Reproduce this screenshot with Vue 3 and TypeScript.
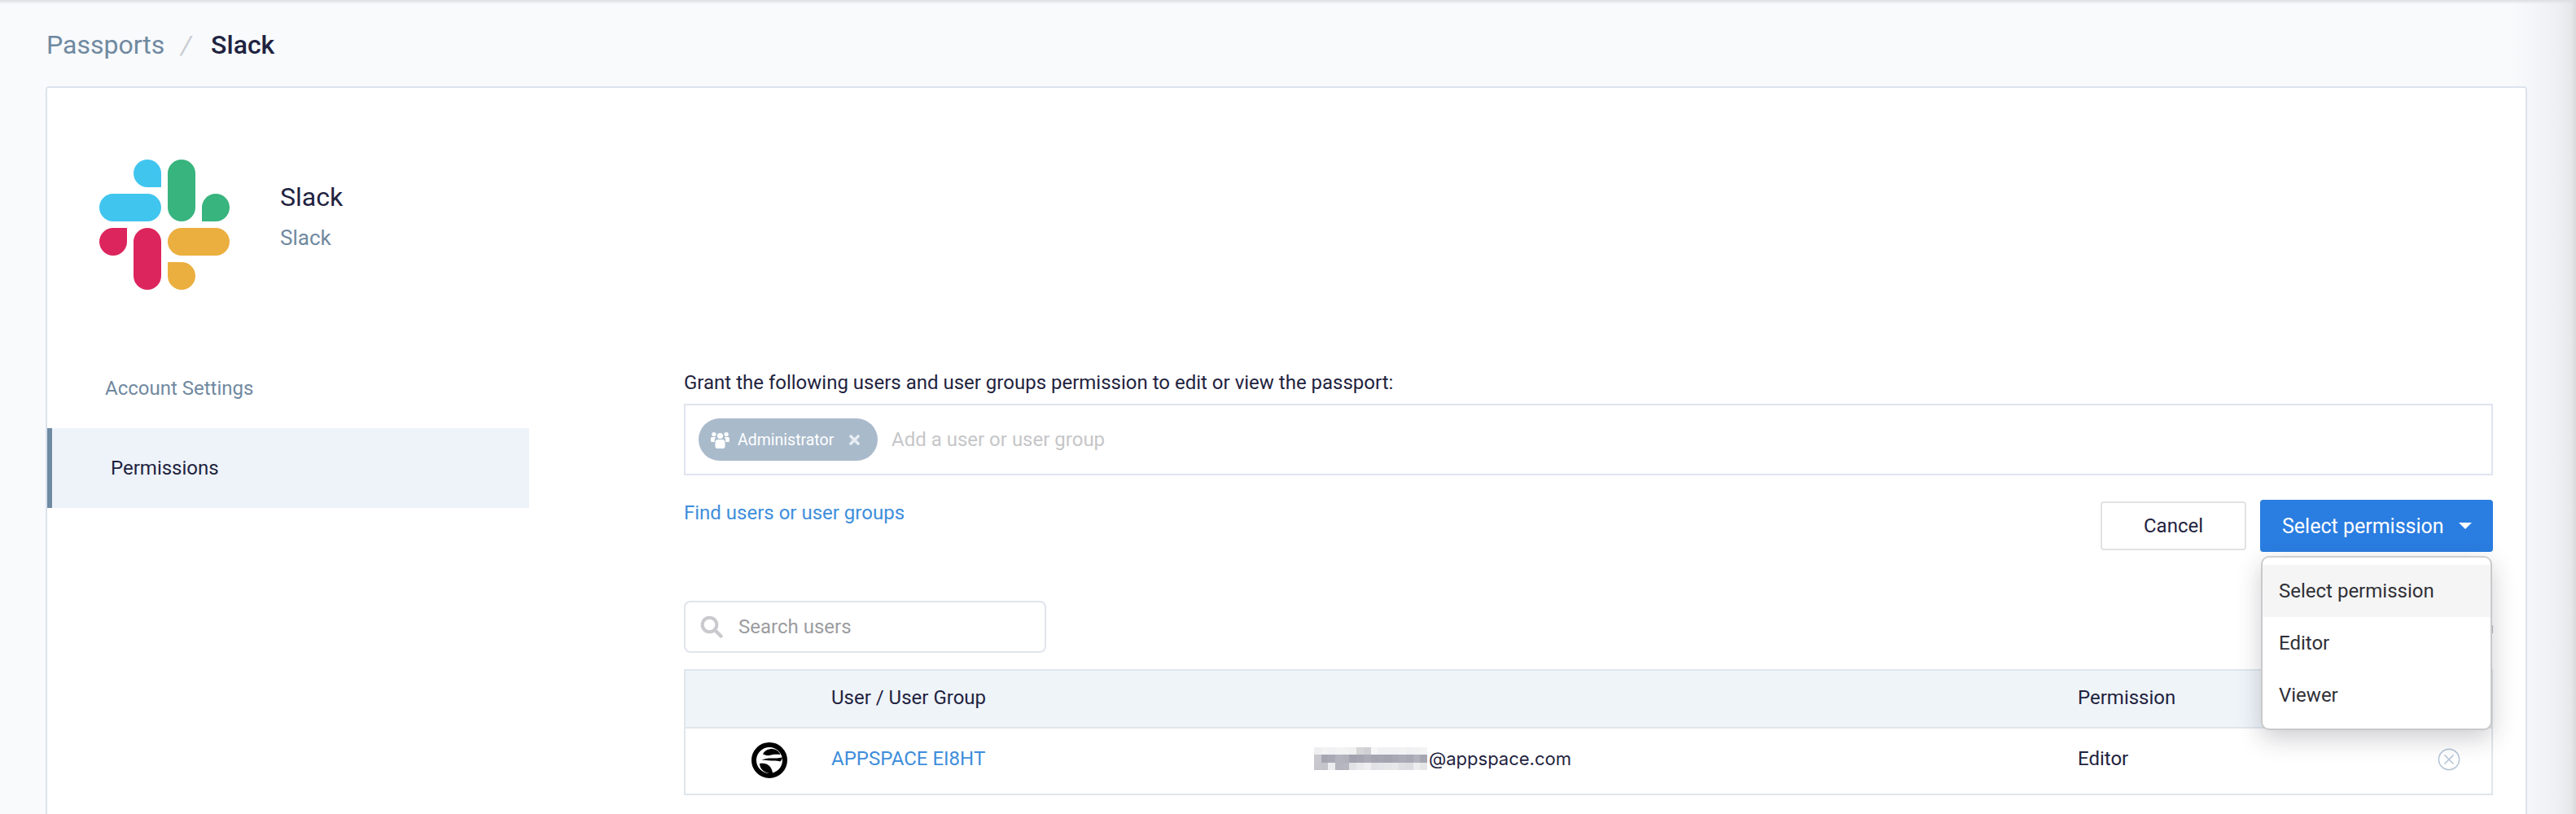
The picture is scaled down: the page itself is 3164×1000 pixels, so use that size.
<script setup lang="ts">
const options: string[] = ['Select permission', 'Editor', 'Viewer']

const blur: string[][] = [
  ['#efeff1','#f3f3f4','#f0f0f2','#f3f3f4','#f2f2f3','#f0f0f1','#d6d6d9','#d0d0d4','#f6f6f7','#f1f1f3','#f1f1f3','#f0f0f2','#f2f2f3','#f0f0f2','#f1f1f3','#f3f3f4'],
  ['#c8c8ce','#a6a6b3','#a9a9b6','#b4b4bf','#b1b1bc','#a1a1af','#a5a5b2','#abaab7','#a5a5b2','#a6a6b3','#a4a4b1','#a8a8b5','#acacb8','#a8a8b5','#b2b2bd','#a6a6b3'],
  ['#c6c6cc','#c4c4cb','#ededf0','#b5b5bf','#b7b7c1','#e2e2e6','#eaeaed','#efeff1','#e2e2e6','#e4e4e8','#e6e6e9','#e8e8eb','#dfdfe3','#dcdce1','#ededf0','#e6e6e9'],
]
</script>

<template>
  <div class="page">
    <nav class="crumbs">
      <span class="crumb-link">Passports</span>
      <span class="crumb-sep">/</span>
      <span class="crumb-current">Slack</span>
    </nav>

    <section class="card">
      <header class="head">
        <svg class="logo" viewBox="0 0 160 160" width="160" height="160">
          <path fill="#40c5ef" d="M76 34h-17a17 17 0 1 1 17-17z" />
          <rect fill="#40c5ef" x="0" y="42" width="76" height="34" rx="17" />
          <rect fill="#38b47e" x="84" y="0" width="34" height="76" rx="17" />
          <path fill="#38b47e" d="M126 76h17a17 17 0 1 0-17-17z" />
          <path fill="#dd255d" d="M34 84v17a17 17 0 1 1-17-17z" />
          <rect fill="#dd255d" x="42" y="84" width="34" height="76" rx="17" />
          <rect fill="#ebaf3f" x="84" y="84" width="76" height="34" rx="17" />
          <path fill="#ebaf3f" d="M84 126h17a17 17 0 1 1-17 17z" />
        </svg>
        <div class="head-text">
          <div class="title">Slack</div>
          <div class="subtitle">Slack</div>
        </div>
      </header>

      <div class="body">
        <aside class="side">
          <div class="side-item">Account Settings</div>
          <div class="side-item active">Permissions</div>
        </aside>

        <main class="content">
          <label class="grant">Grant the following users and user groups permission to edit or view the passport:</label>
          <div class="tag-input">
            <span class="tag">
              <svg class="tag-icon" viewBox="0 0 23 21" width="23" height="21">
                <circle cx="11.5" cy="5.5" r="3.6" fill="#fff" />
                <circle cx="3.9" cy="3.6" r="2.7" fill="#fff" />
                <circle cx="19.1" cy="3.6" r="2.7" fill="#fff" />
                <path fill="#fff" d="M0 8.5C0 7.5 1 7 2 7h3c.6 0 1 .2 1.3.5-.9 1-1.6 2-1.6 3.5v2H1.5C.7 13 0 12.4 0 11.5zM23 8.5C23 7.5 22 7 21 7h-3c-.6 0-1 .2-1.3.5.9 1 1.6 2 1.6 3.5v2h3.2c.8 0 1.5-.6 1.5-1.5z" />
                <path fill="#fff" d="M8.5 10h6c1.7 0 3 1.3 3 3v5.5c0 1.4-1.1 2.5-2.5 2.5H8c-1.4 0-2.5-1.1-2.5-2.5V13c0-1.7 1.3-3 3-3z" />
              </svg>
              <span class="tag-text">Administrator</span>
              <svg class="tag-x" viewBox="0 0 13 13" width="13" height="13">
                <path d="M2 2l9 9M11 2l-9 9" stroke="#e6ecf2" stroke-width="3.6" stroke-linecap="round" />
              </svg>
            </span>
            <span class="placeholder">Add a user or user group</span>
          </div>

          <div class="action-row">
            <a class="find">Find users or user groups</a>
            <div class="actions">
              <button class="btn-cancel" type="button">Cancel</button>
              <div class="select-wrap">
                <button class="btn-select" type="button">
                  <span>Select permission</span>
                  <svg viewBox="0 0 16 8" width="16" height="8"><path d="M0 0h16L8 8z" fill="#fff" /></svg>
                </button>
                <ul class="menu">
                  <li v-for="(o, i) in options" :key="o" class="menu-item" :class="{ hovered: i === 0 }">{{ o }}</li>
                </ul>
              </div>
            </div>
          </div>

          <div class="search-row">
            <div class="search">
              <svg viewBox="0 0 28 28" width="28" height="28">
                <circle cx="11.5" cy="11.5" r="8.8" fill="none" stroke="#c9c9ce" stroke-width="4" />
                <path d="M18 18l7.5 7.5" stroke="#c9c9ce" stroke-width="4.4" stroke-linecap="round" />
              </svg>
              <span class="search-text">Search users</span>
            </div>
            <span class="pager-edge"></span>
          </div>

          <div class="table">
            <div class="tr th">
              <div></div>
              <div>User / User Group</div>
              <div></div>
              <div>Permission</div>
              <div></div>
            </div>
            <div class="tr td">
              <div class="avatar-cell">
                <svg viewBox="0 0 44 44" width="44" height="44">
                  <circle cx="22" cy="22" r="19" fill="#fff" stroke="#000" stroke-width="6" />
                  <path d="M14 14.5C16 10 21 8 25 8C30 8 34 11 35.5 15C30 14.5 26 15 22 16C19 16.5 16 15.5 14 14.5z" />
                  <path d="M12 22C16 20 20 19.5 25 19.5C29 19.5 33 19.5 38 18.5C37.500 21 36.500 23 35 23.500C33 22.500 30 22.500 27 22.500C22 22.500 16 21 12 22z" />
                  <path d="M10 26C15 25 20 26 23 30C25 33 26 36 26 38.500C20 38.500 15 36 12.500 33C11 31 10 28.500 10 26z" />
                </svg>
              </div>
              <a class="user-link">APPSPACE EI8HT</a>
              <div class="email">
                <svg class="blur" viewBox="0 0 16 3" width="139" height="28" preserveAspectRatio="none" shape-rendering="crispEdges">
                  <template v-for="(row, y) in blur" :key="y">
                    <rect v-for="(c, x) in row" :key="x" :x="x" :y="y" width="1" height="1" :fill="c" />
                  </template>
                </svg>
                <span class="email-text">@appspace.com</span>
              </div>
              <div>Editor</div>
              <div class="remove-cell">
                <svg viewBox="0 0 28 28" width="28" height="28">
                  <circle cx="14" cy="14" r="12.6" fill="none" stroke="#b7c7d7" stroke-width="1.600" />
                  <path d="M8.500 8.500l11 11M19.500 8.500l-11 11" stroke="#b7c7d7" stroke-width="1.600" />
                </svg>
              </div>
            </div>
          </div>
        </main>
      </div>
    </section>
  </div>
</template>

<style>
html, body { margin: 0; padding: 0; }
</style>

<style scoped>
.page {
  position: relative;
  box-sizing: border-box;
  width: 3164px;
  height: 1000px;
  overflow: hidden;
  padding-left: 56px;
  display: flex;
  flex-direction: column;
  background: linear-gradient(to right, #f8fafc 3085px, #eef0f3 3140px, #e6e8ea 3158px, #d8dadc 3164px);
  font-family: Roboto, "Liberation Sans", sans-serif;
  color: #1f2340;
  font-size: 24px;
}
.page::before {
  content: "";
  position: absolute;
  left: 0;
  right: 0;
  top: 0;
  height: 5px;
  background: linear-gradient(to bottom, #dcdfe2, rgba(248, 250, 252, 0));
}
.crumbs {
  box-sizing: border-box;
  height: 106px;
  flex: none;
  display: flex;
  align-items: center;
  padding: 3px 0 0 1px;
  font-size: 32px;
}
.crumb-link { color: #7089a0; }
.crumb-sep { color: #c9cdd1; margin: 0 24px 0 20px; font-style: italic; }
.crumb-current { font-weight: 500; color: #1f2340; }

.card {
  box-sizing: border-box;
  width: 3048px;
  flex: none;
  height: 920px;
  border: 2px solid #dde3ee;
  border-radius: 4px;
  background: #fff;
  padding-top: 88px;
}
.head {
  display: flex;
  align-items: center;
  padding-left: 64px;
  gap: 62px;
}
.logo { display: block; flex: none; }
.head-text { display: flex; flex-direction: column; margin-bottom: 22px; }
.title { font-size: 32px; line-height: 44px; }
.subtitle { font-size: 26px; line-height: 36px; margin-top: 10px; color: #7089a0; }

.body {
  display: flex;
  margin-top: 72px;
}
.side { flex: none; width: 592px; }
.side-item {
  box-sizing: border-box;
  height: 98px;
  display: flex;
  align-items: center;
  padding-left: 71px;
  color: #7089a0;
}
.side-item.active {
  background: #eef3fa;
  border-left: 6px solid #6f8aa3;
  padding-left: 72px;
  color: #1f2340;
}
.content {
  width: 2222px;
  margin-left: 190px;
  padding-top: 26px;
}
.grant { display: block; line-height: 32px; }
.tag-input {
  box-sizing: border-box;
  height: 88px;
  margin-top: 10px;
  border: 2px solid #dfe4ef;
  display: flex;
  align-items: center;
  padding-left: 16px;
}
.tag {
  box-sizing: border-box;
  width: 220px;
  height: 52px;
  border-radius: 26px;
  background: #a9bacb;
  color: #fff;
  display: flex;
  align-items: center;
  padding-left: 15px;
  font-size: 19.5px;
}
.tag-icon { flex: none; }
.tag-text { margin-left: 10px; }
.tag-x { flex: none; margin-left: 19px; }
.placeholder { margin-left: 17px; color: #c6c6c8; }

.action-row {
  display: flex;
  justify-content: space-between;
  align-items: flex-start;
  padding-top: 30px;
}
.find { color: #3e8edb; line-height: 32px; }
.actions { display: flex; align-items: center; gap: 17px; }
.btn-cancel {
  box-sizing: border-box;
  width: 179px;
  height: 60px;
  border: 2px solid #e2e2e2;
  border-radius: 4px;
  background: #fff;
  color: #1f2340;
  font: inherit;
  padding: 0;
}
.select-wrap { position: relative; }
.btn-select {
  box-sizing: border-box;
  width: 286px;
  height: 64px;
  border: 0;
  border-radius: 4px;
  background: #2a7de1;
  color: #fff;
  font: inherit;
  font-size: 25px;
  padding: 0 26px 0 27px;
  display: flex;
  align-items: center;
  justify-content: space-between;
}
.menu {
  box-sizing: border-box;
  position: absolute;
  z-index: 2;
  left: 1px;
  top: 69px;
  width: 284px;
  height: 214px;
  margin: 0;
  padding: 9px 0;
  list-style: none;
  background: #fff;
  border: 2px solid #c9c9c9;
  border-top-color: #cfcfcf;
  border-radius: 10px;
  box-shadow: 0 10px 30px rgba(30, 34, 50, 0.22);
  color: #303036;
}
.menu-item {
  height: 64px;
  display: flex;
  align-items: center;
  padding-left: 20px;
}
.menu-item.hovered { background: #f5f5f5; }

.search-row {
  display: flex;
  justify-content: space-between;
  align-items: flex-start;
  margin-top: 60px;
}
.search {
  box-sizing: border-box;
  width: 445px;
  height: 64px;
  border: 2px solid #e0e4ec;
  border-radius: 8px;
  display: flex;
  align-items: center;
  padding-left: 18px;
  color: #9c9ca0;
}
.search-text { margin-left: 19px; }
.pager-edge {
  width: 2px;
  height: 10px;
  margin-top: 30px;
  background: #b8bcc2;
}

.table { margin-top: 20px; border: 2px solid #dfe6ec; }
.tr {
  box-sizing: border-box;
  display: grid;
  grid-template-columns: 179px 593px 938px 1fr 70px;
  align-items: center;
}
.th {
  height: 71px;
  padding-bottom: 3px;
  background: #eff4f9;
  border-bottom: 2px solid #dfe6ec;
}
.td { height: 80px; padding-bottom: 6px; }
.avatar-cell { display: flex; padding-left: 81px; margin-top: 3px; }
.avatar-cell svg, .remove-cell svg, .blur { display: block; }
.user-link { color: #3e8edb; }
.email { display: flex; align-items: center; }
.email-text { font-family: Inter, Roboto, sans-serif; font-size: 22px; margin-left: 2px; }
.remove-cell { display: flex; padding-left: 4px; margin-top: 2px; }
</style>
